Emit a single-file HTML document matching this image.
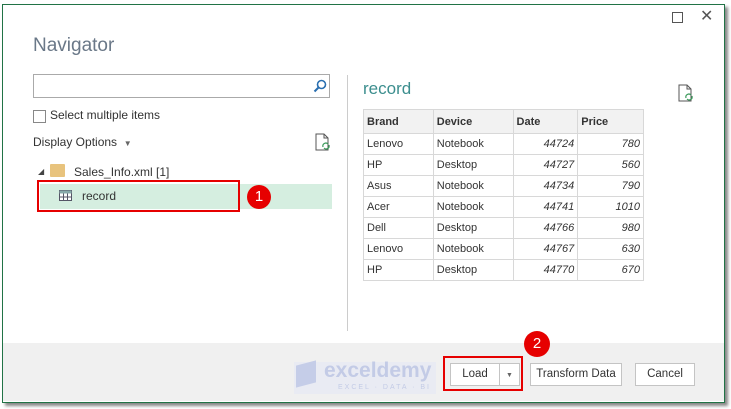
<!DOCTYPE html>
<html><head><style>
body{margin:0;width:731px;height:409px;background:#fff;font-family:"Liberation Sans",sans-serif;position:relative;overflow:hidden}
.a{position:absolute}
.dlg{left:2px;top:4px;width:721px;height:397px;border:1px solid #217346;background:#fff;box-shadow:3px 3px 3px #888}
.foot{left:3px;top:343px;width:721px;height:58px;background:#f0f0f0}
.t{font-size:12px;color:#333}
table{border-collapse:collapse;font-size:11px;color:#333}
td{border:1px solid #d8d8d8;height:21px;padding:0 3px;box-sizing:border-box}
th{border:1px solid #d8d8d8;height:23px;padding:0 3px;text-align:left;background:#f2f2f2;font-weight:bold}
.r{text-align:right;font-style:italic}
.btn{border:1px solid #c4c4c4;background:#fff;height:23px;box-sizing:border-box;font-size:11.5px;color:#333;text-align:center;line-height:21px}
.circ{border-radius:50%;background:#e60000;color:#fff;text-align:center;font-size:15px}
</style></head><body>
<div class="a dlg"></div>
<div class="a foot"></div>
<div class="a" style="left:672px;top:12px;width:9px;height:9px;border:1px solid #555"></div>
<div class="a" style="left:700px;top:6px;font-size:16px;color:#555">✕</div>
<div class="a" style="left:33px;top:35px;font-size:19px;color:#6a7888">Navigator</div>
<div class="a" style="left:33px;top:74px;width:297px;height:24px;box-sizing:border-box;border:1px solid #aaa"></div>
<svg class="a" style="left:313px;top:79px" width="14" height="14"><circle cx="8.5" cy="5.5" r="4" fill="none" stroke="#2a6fb0" stroke-width="1.6"/><line x1="5.5" y1="8.5" x2="1.5" y2="12.5" stroke="#2a6fb0" stroke-width="2"/></svg>
<div class="a" style="left:33px;top:110px;width:11px;height:11px;border:1px solid #888"></div>
<div class="a t" style="left:50px;top:108px">Select multiple items</div>
<div class="a t" style="left:33px;top:135px">Display Options&nbsp;&nbsp;<span style="font-size:8px;color:#666">▼</span></div>
<svg class="a" style="left:315px;top:133px" width="16" height="18"><path d="M1 1h8l4 4v12H1z" fill="none" stroke="#555"/><path d="M9 1v4h4" fill="none" stroke="#555"/><path d="M8 14a3 3 0 0 1 5-3M14 12a3 3 0 0 1-5 3" fill="none" stroke="#3a9a5a" stroke-width="1.2"/></svg>
<div class="a" style="left:38px;top:167px;font-size:8px;color:#444">◢</div>
<div class="a" style="left:50px;top:164px;width:15px;height:13px;background:#e8c37d;border-radius:1px"></div>
<div class="a t" style="left:74px;top:165px">Sales_Info.xml [1]</div>
<div class="a" style="left:40px;top:184px;width:292px;height:25px;background:#d5eee0"></div>
<div class="a" style="left:37px;top:180px;width:199px;height:28px;border:2px solid #e60000"></div>
<svg class="a" style="left:59px;top:190px" width="13" height="11"><rect x=".5" y=".5" width="12" height="10" fill="#fff" stroke="#556"/><rect x=".5" y=".5" width="12" height="3" fill="#8aa"/><path d="M4.5 3.5v7M8.5 3.5v7M.5 7h12" stroke="#556"/></svg>
<div class="a t" style="left:82px;top:189px">record</div>
<div class="a circ" style="left:247px;top:185px;width:24px;height:24px;line-height:24px">1</div>
<div class="a" style="left:347px;top:75px;width:1px;height:256px;background:#ccc"></div>
<div class="a" style="left:363px;top:79px;font-size:17px;color:#3c8e8e">record</div>
<svg class="a" style="left:678px;top:84px" width="16" height="18"><path d="M1 1h8l4 4v12H1z" fill="none" stroke="#555"/><path d="M9 1v4h4" fill="none" stroke="#555"/><path d="M8 14a3 3 0 0 1 5-3M14 12a3 3 0 0 1-5 3" fill="none" stroke="#3a9a5a" stroke-width="1.2"/></svg>
<table class="a" style="left:363px;top:109px;width:281px">
<colgroup><col style="width:70px"><col style="width:80px"><col style="width:65px"><col style="width:66px"></colgroup>
<tr><th>Brand</th><th>Device</th><th>Date</th><th>Price</th></tr>
<tr><td>Lenovo</td><td>Notebook</td><td class="r">44724</td><td class="r">780</td></tr>
<tr><td>HP</td><td>Desktop</td><td class="r">44727</td><td class="r">560</td></tr>
<tr><td>Asus</td><td>Notebook</td><td class="r">44734</td><td class="r">790</td></tr>
<tr><td>Acer</td><td>Notebook</td><td class="r">44741</td><td class="r">1010</td></tr>
<tr><td>Dell</td><td>Desktop</td><td class="r">44766</td><td class="r">980</td></tr>
<tr><td>Lenovo</td><td>Notebook</td><td class="r">44767</td><td class="r">630</td></tr>
<tr><td>HP</td><td>Desktop</td><td class="r">44770</td><td class="r">670</td></tr>
</table>
<div class="a" style="left:294px;top:362px;width:142px;height:32px;background:#e9ebf3"></div>
<div class="a" style="left:296px;top:363px;width:20px;height:22px;background:#c5cde8;transform:skewY(-15deg)"></div>
<div class="a" style="left:324px;top:359px;font-size:21px;font-weight:bold;color:#c3cbe6">exceldemy</div>
<div class="a" style="left:338px;top:384px;font-size:7px;color:#c3cbe6;letter-spacing:2px">EXCEL · DATA · BI</div>
<div class="a btn" style="left:450px;top:363px;width:70px;text-align:left;padding-left:0">
<span style="display:inline-block;width:48px;text-align:center;border-right:1px solid #c4c4c4">Load</span><span style="font-size:7px;color:#666;padding-left:6px">▼</span></div>
<div class="a" style="left:443px;top:356px;width:76px;height:31px;border:2px solid #e60000"></div>
<div class="a circ" style="left:524px;top:331px;width:26px;height:26px;line-height:26px">2</div>
<div class="a btn" style="left:530px;top:363px;width:92px">Transform Data</div>
<div class="a btn" style="left:635px;top:363px;width:60px">Cancel</div>
</body></html>
